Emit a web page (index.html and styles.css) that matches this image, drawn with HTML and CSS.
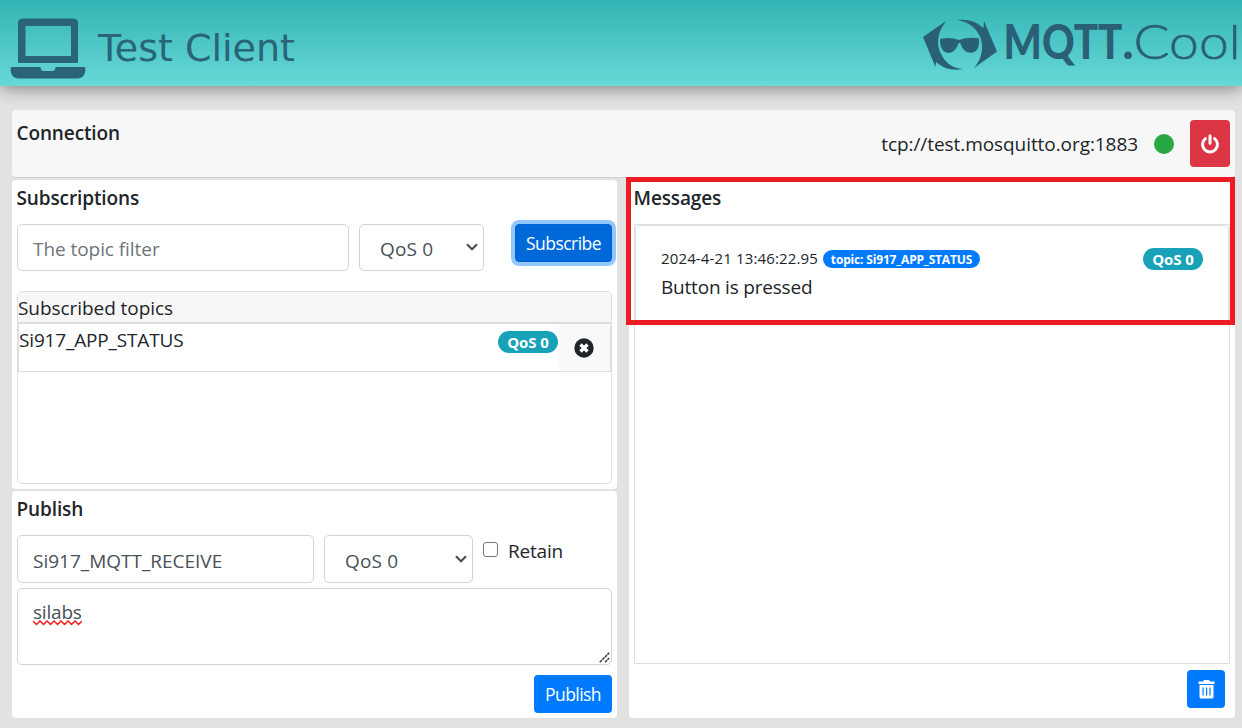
FILE: index.html
```html
<!DOCTYPE html>
<html lang="en">
<head>
<meta charset="utf-8">
<title>Test Client</title>
<link rel="stylesheet" href="styles.css">
</head>
<body>
<header class="topbar">
  <svg class="laptop" viewBox="0 0 76 61" width="76" height="61">
    <path fill="#2a6478" fill-rule="evenodd" d="M13 .5h50q5 0 5 5V45H8V5.500q0-5 5-5zM15.500 8v30h45.500V8z"/>
    <path fill="#2a6478" d="M2 49h27.500q1.500 0 1.500 2t3 2h8q3 0 3-2t1.500-2H74q1.500 0 1.500 1.500Q75.500 60.500 67 60.500h-58Q.5 60.500 .5 50.500.5 49 2 49z"/>
  </svg>
  <h1 class="title">Test Client</h1>
  <svg class="logo" viewBox="0 0 330 86" width="330" height="86">
    <g fill="#2a6076">
      <path d="M11 37 34 21Q21 39 29 54 36 68 51 69 35 72 24 62L23.500 67z"/>
      <path d="M45 20Q61 18 71.500 28L72 21 85 51.500 62 68Q73 55 69 39 63 23 45 20z"/>
      <path d="M28 39Q38 36.500 47 40q10-3.500 20-1.500 1 12-6 14-9 2-12.500-9-1-1.500-2 0Q43 53 36 53q-8-1-8-14z"/>
      <text class="logo-bold" x="91.500" y="59" textLength="119" lengthAdjust="spacingAndGlyphs">MQTT</text>
      <text class="logo-bold" x="210.500" y="59" textLength="11" lengthAdjust="spacingAndGlyphs">.</text>
      <text class="logo-light" x="221.500" y="59" textLength="107" lengthAdjust="spacingAndGlyphs">Cool</text>
    </g>
  </svg>
</header>

<main class="page">
  <section class="card connection">
    <h2 class="heading">Connection</h2>
    <div class="conn-info">
      <span class="url">tcp://test.mosquitto.org:1883</span>
      <span class="dot"></span>
      <button class="btn power" aria-label="Disconnect">
        <svg viewBox="0 0 20 20" width="20" height="20" fill="none" stroke="#fff" stroke-width="3" stroke-linecap="round"><path d="M5.400 4.600a7.500 7.500 0 1 0 9.200 0M10 1.800v7.500"/></svg>
      </button>
    </div>
  </section>

  <div class="columns">
    <div class="left">
      <section class="card subs">
        <h2 class="heading">Subscriptions</h2>
        <div class="sub-form">
          <div class="field filter"><span class="placeholder">The topic filter</span></div>
          <div class="field select sub-qos"><span class="qos-text">QoS 0</span>
            <svg class="chev" viewBox="0 0 12 8" width="12" height="8"><path d="M1 1.200 6 6.200 11 1.200" fill="none" stroke="#495057" stroke-width="2.200"/></svg></div>
          <button class="btn subscribe">Subscribe</button>
        </div>
        <div class="topics">
          <div class="topics-head">Subscribed topics</div>
          <div class="topic-row">
            <span class="topic-name">Si917_APP_STATUS</span>
            <span class="badge">QoS 0</span>
            <span class="remove">
              <svg viewBox="0 0 20 20" width="20" height="20"><circle cx="10" cy="10" r="9.700" fill="#212529"/><path d="M6.500 6.500l7 7M13.500 6.500l-7 7" stroke="#fff" stroke-width="3.400"/></svg>
            </span>
          </div>
        </div>
      </section>

      <section class="card publish">
        <h2 class="heading">Publish</h2>
        <div class="pub-form">
          <div class="field pub-topic"><span>Si917_MQTT_RECEIVE</span></div>
          <div class="field select pub-qos"><span class="qos-text">QoS 0</span>
            <svg class="chev" viewBox="0 0 12 8" width="12" height="8"><path d="M1 1.200 6 6.200 11 1.200" fill="none" stroke="#495057" stroke-width="2.200"/></svg></div>
          <label class="retain"><span class="box"></span><span class="retain-text">Retain</span></label>
        </div>
        <div class="area">
          <span class="word">silabs<svg class="squiggle" viewBox="0 0 49 6" width="49" height="6"><path d="M0 1l3.500 3.500L7 1l3.500 3.500L14 1l3.500 3.500L21 1l3.500 3.500L28 1l3.500 3.500L35 1l3.500 3.500L42 1l3.500 3.500L49 1" fill="none" stroke="#f02020" stroke-width="1.500"/></svg></span>
          <svg class="grip" viewBox="0 0 11 11" width="11" height="11"><path d="M.8 10.200 10.200.8M6 10.200 10.200 6" stroke="#444" stroke-width="1.600" stroke-dasharray="3 .6"/></svg>
        </div>
        <button class="btn send">Publish</button>
      </section>
    </div>

    <section class="card messages">
      <h2 class="heading">Messages</h2>
      <div class="list">
        <article class="message">
          <div class="meta">
            <span class="time">2024-4-21 13:46:22.95</span>
            <span class="topic-badge">topic: Si917_APP_STATUS</span>
            <span class="badge">QoS 0</span>
          </div>
          <p class="body">Button is pressed</p>
        </article>
      </div>
      <button class="btn clear" aria-label="Clear">
        <svg viewBox="0 0 17 19" width="17" height="19"><path fill="#fff" fill-rule="evenodd" d="M.5 1.500H5L6 0h5l1 1.500h4.500V4H.5zM1.500 5h14v12q0 1.500-1.500 1.500H3Q1.500 18.500 1.500 17zM4.500 7.500v8h1.200v-8zM8 7.500v8h1.200v-8zM11.400 7.500v8h1.200v-8z"/></svg>
      </button>
      <div class="highlight"></div>
    </section>
  </div>
</main>
</body>
</html>
```
FILE: styles.css
```css
* { box-sizing: border-box; }
body {
  margin: 0;
  width: 1242px;
  height: 728px;
  overflow: hidden;
  background: #e2e2e2;
  color: #212529;
  font: 19px/30px "Open Sans", "Noto Sans", sans-serif;
  letter-spacing: -.06px;
}
h1, h2, p { margin: 0; }
button { font: inherit; }
.topbar {
  display: flex;
  height: 86px;
  padding-left: 10px;
  background: linear-gradient(#33b4b4, #68d8d8);
  box-shadow: 0 2px 16px rgba(0, 0, 0, .45);
}
.laptop { margin-top: 18px; }
.title {
  margin: 18px 0 0 12px;
  font: 38px/60px "DejaVu Sans", sans-serif;
  letter-spacing: 0;
  color: #2a6478;
  white-space: nowrap;
}
.logo { margin-left: auto; letter-spacing: 0; }
.logo-bold { font: 900 47px Lato, sans-serif; }
.logo-light { font: 300 47px Lato, sans-serif; stroke: #2a6076; stroke-width: .6px; }

.page { display: flex; flex-direction: column; gap: 2px; padding: 24px 7px 0 12px; }
.card { background: #fff; border-radius: 4px; }
.heading { margin-left: -.5px; font-size: 19px; font-weight: 600; line-height: 24px; letter-spacing: -.12px; white-space: nowrap; }
.btn {
  display: flex;
  align-items: center;
  justify-content: center;
  padding: 0;
  border: 0;
  border-radius: 4px;
  background: #007bff;
  color: #fff;
  font-size: 17.5px;
  letter-spacing: -.55px;
}
.connection {
  display: flex;
  justify-content: space-between;
  height: 68px;
  padding: 11px 5px 0;
  background: #f7f7f7;
  border-bottom: 1px solid #d2d2d2;
}
.conn-info { display: flex; align-items: center; height: 45px; }
.url { letter-spacing: -.07px; padding-top: 1px; }
.dot { width: 20px; height: 20px; margin: 0 16px; border-radius: 50%; background: #28a745; }
.power { width: 40px; height: 47px; background: #dc3545; }

.columns { display: flex; gap: 12px; }
.left { display: flex; flex-direction: column; gap: 2px; width: 605px; }
.subs { height: 309px; padding: 6px 5px 0; }
.sub-form { display: flex; align-items: flex-start; margin-top: 14px; }
.field {
  display: flex;
  align-items: center;
  height: 47px;
  padding: 3px 15px 0;
  border: 1px solid #ced4da;
  border-radius: 5px;
  color: #495057;
}
.filter { width: 332px; margin-right: 10px; }
.placeholder { color: #6c757d; }
.select { justify-content: space-between; padding: 3px 5px 0 20px; }
.qos-text { letter-spacing: .15px; }
.chev { margin-top: -4px; }
.sub-qos { width: 125px; }
.subscribe {
  width: 97px;
  height: 38px;
  margin-left: 31px;
  background: #0069d9;
  border: 1px solid #0062cc;
  box-shadow: 0 0 0 4px #93c7ff;
}
.topics { height: 193px; margin-top: 20px; border: 1px solid #dfdfdf; border-radius: 5px; }
.topics-head { height: 32px; background: #f7f7f7; border-bottom: 2px solid #dcdcdc; line-height: 32px; border-radius: 4px 4px 0 0; }
.topic-row { display: flex; height: 48px; border: 1px solid #dfdfdf; border-top: 0; border-radius: 3px 3px 0 0; }
.topic-name { line-height: 33px; letter-spacing: -.16px; }
.badge {
  width: 60px;
  height: 22px;
  border-radius: 11px;
  background: #17a2b8;
  color: #fff;
  font-size: 15px;
  font-weight: 700;
  line-height: 22px;
  letter-spacing: -.1px;
  text-align: center;
}
.topic-row .badge { margin: 7px 1px 0 auto; }
.remove { display: flex; align-items: center; justify-content: center; width: 51px; padding: 1px 2px 0 0; background: #f8f9fa; border-radius: 4px; }

.publish { display: flex; flex-direction: column; height: 227px; padding: 6px 5px 0; }
.pub-form { display: flex; margin-top: 14px; }
.pub-form .field { height: 48px; }
.pub-topic { width: 297px; margin-right: 10px; letter-spacing: 0; }
.pub-qos { width: 149px; }
.retain { display: flex; margin-left: 10px; }
.retain-text { padding-top: 1px; letter-spacing: -.2px; }
.box { width: 15px; height: 15px; margin: 7px 10px 0 0; border: 1px solid #767676; border-radius: 3px; }
.area {
  position: relative;
  height: 77px;
  margin-top: 5px;
  padding: 8px 15px;
  border: 1px solid #ced4da;
  border-radius: 5px;
  color: #495057;
}
.word { position: relative; letter-spacing: -.2px; }
.squiggle { position: absolute; left: 0; bottom: -1px; }
.grip { position: absolute; right: 1px; bottom: 1px; }
.send { width: 78px; height: 38px; margin-top: 10px; align-self: flex-end; }

.messages { position: relative; display: flex; flex-direction: column; width: 606px; height: 538px; padding: 6px 5px 0; }
.list { height: 440px; margin-top: 14px; border: 1px solid #dfdfe3; }
.message { height: 98px; padding: 19px 25px 0; border: 1px solid #dfdfe3; border-radius: 5px 5px 0 0; }
.meta { display: flex; align-items: center; height: 28px; }
.time { margin-top: -2px; font-size: 15px; letter-spacing: .14px; white-space: nowrap; }
.topic-badge {
  width: 157px;
  height: 18px;
  margin-left: 5px;
  border-radius: 9px;
  background: #007bff;
  color: #fff;
  font-size: 12px;
  font-weight: 700;
  line-height: 19px;
  letter-spacing: -.17px;
  text-align: center;
  white-space: nowrap;
}
.meta .badge { margin-left: auto; }
.body { margin-top: -1px; letter-spacing: -.2px; }
.clear { width: 38px; height: 38px; margin: 6px 5px 0 0; align-self: flex-end; }
.highlight { position: absolute; left: -3px; top: -3px; width: 609px; height: 148px; border: 5px solid #ed1c24; }
```
